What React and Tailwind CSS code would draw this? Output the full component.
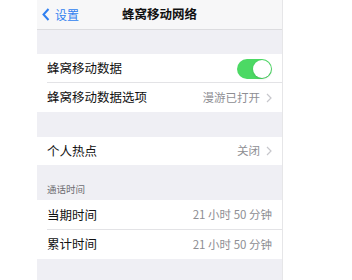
import React from 'react';

const font = { fontFamily: '"Noto Sans CJK SC", "Noto Sans", sans-serif' };

function Chevron() {
  return (
    <svg width="6" height="10" viewBox="0 0 6 10" className="ml-[6px]">
      <path d="M1 1l4 4-4 4" fill="none" stroke="#c7c7cc" strokeWidth="1.2" />
    </svg>
  );
}

function Row({ label, value, chevron, toggle, h = 'h-[29px]', last }) {
  return (
    <div className={`relative flex items-center pl-[10px] pr-[10px] bg-white ${h}`}>
      <span className="text-[12.5px] text-[#111]">{label}</span>
      <div className="ml-auto flex items-center">
        {value && <span className="text-[11.5px] text-[#8e8e93]">{value}</span>}
        {chevron && <Chevron />}
        {toggle && (
          <div className="w-[35px] h-[20px] rounded-full bg-[#4cd964] flex items-center justify-end pr-[1px]">
            <div className="w-[18px] h-[18px] rounded-full bg-white shadow" />
          </div>
        )}
      </div>
      {!last && <div className="absolute bottom-0 left-[10px] right-0 h-px bg-[#e3e3e6]" />}
    </div>
  );
}

export default function App() {
  return (
    <div className="w-[352px] h-[280px] bg-white overflow-hidden" style={font}>
      <div className="ml-[37px] w-[246px] h-full bg-[#efeff4] border-r border-[#e6e6e8] flex flex-col">
        <div className="h-[30px] bg-[#f7f7f8] border-b border-[#dcdcdf] flex items-center relative">
          <div className="flex items-center pl-[5px] text-[#2f7ff0]">
            <svg width="8" height="13" viewBox="0 0 8 13">
              <path d="M6.5 1L1.5 6.5l5 5.5" fill="none" stroke="#2f7ff0" strokeWidth="2" />
            </svg>
            <span className="ml-[5px] text-[12px]">设置</span>
          </div>
          <span className="absolute left-0 right-0 text-center text-[12.5px] font-bold text-[#111] pointer-events-none">
            蜂窝移动网络
          </span>
        </div>
        <div className="h-[24px]" />
        <Row label="蜂窝移动数据" toggle />
        <Row label="蜂窝移动数据选项" value="漫游已打开" chevron last />
        <div className="h-[25px]" />
        <Row label="个人热点" value="关闭" chevron h="h-[28px]" last />
        <div className="h-[35px] flex items-end pl-[10px] pb-[4px]">
          <span className="text-[9.5px] text-[#6d6d72]">通话时间</span>
        </div>
        <Row label="当期时间" value="21 小时 50 分钟" h="h-[30px]" />
        <Row label="累计时间" value="21 小时 50 分钟" last />
      </div>
    </div>
  );
}
